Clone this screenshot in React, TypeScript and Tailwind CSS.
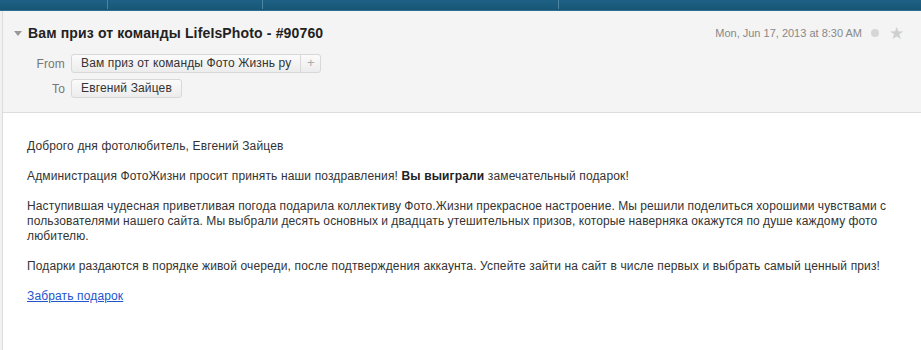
export default function App() {
  return (
    <div
      className="w-[921px] h-[350px] overflow-hidden bg-white text-[#222] flex flex-col"
      style={{ fontFamily: '"Liberation Sans", Arial, sans-serif' }}
    >
      <div className="h-[11px] shrink-0 bg-gradient-to-b from-[#1d6286] to-[#185574] flex items-start border-b border-[#2c6e90]">
        <div className="w-[108px] h-[9px] border-r border-[#4d84a2]" />
        <div className="w-[155px] h-[9px] border-r border-[#4d84a2]" />
        <div className="w-[296px] h-[9px] border-r border-[#4d84a2]" />
      </div>
      <div className="flex flex-1 min-h-0">
        <div className="w-[3px] bg-[#f1f1f1] border-r border-[#dcdcdc] shrink-0" />
        <div className="flex-1 flex flex-col">
          <div className="bg-[#f4f4f4] border-b border-[#dddddd] h-[102px] shrink-0 pt-[12px]">
            <div className="flex items-center h-[20px]">
              <div className="w-[25px] flex justify-end pr-[6px]">
                <div className="w-0 h-0 border-l-[4px] border-r-[4px] border-t-[5px] border-l-transparent border-r-transparent border-t-[#999]" />
              </div>
              <h1 className="text-[14px] font-bold text-[#222] tracking-[0.15px]">
                Вам приз от команды LifeIsPhoto - #90760
              </h1>
              <div className="ml-auto flex items-center text-[11px] text-[#888]">
                <span>Mon, Jun 17, 2013 at 8:30 AM</span>
                <span className="ml-[9px] w-[8px] h-[8px] rounded-full bg-[#d6d6d6]" />
                <span className="ml-[10px] mr-[17px] text-[#cfcfcf] text-[17px] leading-none">★</span>
              </div>
            </div>
            <div className="mt-[11px] flex flex-col gap-[6px] text-[12px] tracking-[0.14px]">
              <div className="flex items-center">
                <span className="w-[68px] text-right pr-[6px] text-[#777]">From</span>
                <div className="flex h-[19px] border border-[#d8d8d8] rounded-[3px] bg-gradient-to-b from-[#fbfbfb] to-[#ececec]">
                  <span className="px-[9px] leading-[17px] text-[#333]">Вам приз от команды Фото Жизнь ру</span>
                  <span className="w-[20px] border-l border-[#d8d8d8] text-center leading-[16px] text-[#aaa] text-[13px]">+</span>
                </div>
              </div>
              <div className="flex items-center">
                <span className="w-[68px] text-right pr-[6px] text-[#777]">To</span>
                <div className="h-[19px] border border-[#d8d8d8] rounded-[3px] bg-gradient-to-b from-[#fbfbfb] to-[#ececec] px-[9px] leading-[17px] text-[#333]">
                  Евгений Зайцев
                </div>
              </div>
            </div>
          </div>
          <div className="pl-[24px] pt-[26px] text-[12px] leading-[15px] tracking-[0.14px] text-[#333]">
            <p>Доброго дня фотолюбитель, Евгений Зайцев</p>
            <p className="mt-[15px]">
              Администрация ФотоЖизни просит принять наши поздравления! <b className="text-[#222]">Вы выиграли</b> замечательный подарок!
            </p>
            <p className="mt-[15px] w-[866px] [word-spacing:-0.3px]">
              Наступившая чудесная приветливая погода подарила коллективу Фото.Жизни прекрасное настроение. Мы решили поделиться хорошими чувствами с пользователями нашего сайта. Мы выбрали десять основных и двадцать утешительных призов, которые наверняка окажутся по душе каждому фото любителю.
            </p>
            <p className="mt-[15px]">
              Подарки раздаются в порядке живой очереди, после подтверждения аккаунта. Успейте зайти на сайт в числе первых и выбрать самый ценный приз!
            </p>
            <p className="mt-[15px]">
              <a href="#" className="text-[#2255cc] underline">Забрать подарок</a>
            </p>
          </div>
        </div>
      </div>
    </div>
  );
}
